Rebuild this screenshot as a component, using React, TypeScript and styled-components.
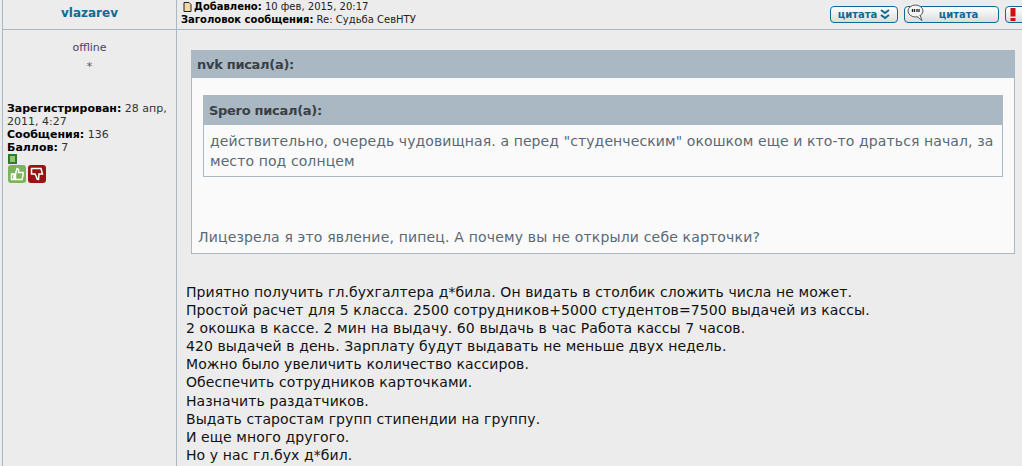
import styled, { createGlobalStyle } from "styled-components";

const GlobalStyle = createGlobalStyle`
  html, body {
    margin: 0;
    padding: 0;
    background: #ececec;
    overflow: hidden;
  }
  body {
    font-family: "DejaVu Sans", Verdana, sans-serif;
    color: #000;
  }
`;

const Page = styled.div`
  width: 1022px;
  height: 466px;
  overflow: hidden;
  padding-left: 2px;
  box-sizing: border-box;
`;

const PostGrid = styled.div`
  display: grid;
  grid-template-columns: 174px 846px;
  grid-template-rows: 30px 436px;
  width: 1020px;
  border-left: 1px solid #a9b8c2;
`;

const AuthorCell = styled.div`
  border-right: 1px solid #a9b8c2;
  border-bottom: 1px solid #a9b8c2;
  display: flex;
  align-items: center;
  justify-content: center;
  box-sizing: border-box;
  color: #0f6a93;
  font-weight: 700;
  font-size: 12px;
  padding-bottom: 3px;
`;

const HeaderCell = styled.div`
  border-bottom: 1px solid #a9b8c2;
  display: flex;
  justify-content: space-between;
  box-sizing: border-box;
  overflow: hidden;
`;

const PostMeta = styled.div`
  font-size: 10px;
  line-height: 13px;
  padding: 0 0 0 4px;
  white-space: nowrap;
  color: #222;

  b {
    color: #000;
  }
`;

const MetaFirst = styled.div`
  display: flex;
  align-items: center;
  gap: 2px;
  padding-left: 2px;
  white-space: pre;
`;

const Buttons = styled.div`
  display: flex;
  gap: 6px;
  padding-top: 6px;
  margin-right: -22px;
`;

const ActionButton = styled.div<{ $width: number; $justify?: string; $inset?: number }>`
  width: ${(p) => p.$width}px;
  height: 17px;
  box-sizing: border-box;
  border: 1px solid #0f6a93;
  border-radius: 4px;
  background: linear-gradient(#ffffff, #dcdcdc);
  color: #0f6a93;
  font-size: 10px;
  font-weight: 700;
  position: relative;
  display: flex;
  align-items: center;
  justify-content: ${(p) => p.$justify || "center"};
  gap: 3px;
  padding-left: ${(p) => p.$inset || 0}px;
`;

const BubbleOver = styled.svg`
  position: absolute;
  left: 2px;
  top: -3px;
`;

const ProfileCell = styled.div`
  border-right: 1px solid #a9b8c2;
  box-sizing: border-box;
  padding: 11px 4px 0 4px;
  font-size: 11px;
  line-height: 13px;
`;

const Status = styled.div`
  text-align: center;
  color: #4c4060;
  font-size: 11px;
`;

const Rank = styled.div`
  text-align: center;
  color: #555;
  margin-top: 6px;
`;

const ProfileInfo = styled.div`
  margin-top: 29px;
  color: #333;
  font-size: 11px;

  b {
    color: #000;
  }
`;

const OnlineMark = styled.div`
  width: 9px;
  height: 10px;
  margin-left: 1px;
  box-sizing: border-box;
  background: #8fc96a;
  border: 2px solid #2f7d2c;
`;

const Votes = styled.div`
  display: flex;
  gap: 2px;
  margin-top: 1px;
  margin-left: 1px;
`;

const VoteButton = styled.div<{ $color: string }>`
  width: 18px;
  height: 18px;
  border-radius: 3px;
  background: ${(p) => p.$color};
  display: flex;
  align-items: center;
  justify-content: center;
`;

const BodyCell = styled.div`
  padding: 20px 0 0 14px;
  box-sizing: border-box;
`;

const QuoteBox = styled.div<{ $inner?: boolean }>`
  box-sizing: border-box;
  background: #fafafa;
  border: 1px solid #a9b8c2;
  width: ${(p) => (p.$inner ? "800px" : "824px")};
  color: #5b6875;
`;

const QuoteTitle = styled.div<{ $height: number; $pad: number }>`
  height: ${(p) => p.$height}px;
  background: #a9b8c2;
  color: #3a3f46;
  font-weight: 700;
  font-size: 13px;
  letter-spacing: -0.3px;
  line-height: ${(p) => p.$height}px;
  padding-left: ${(p) => p.$pad}px;
`;

const OuterBody = styled.div`
  padding: 17px 11px 6px 11px;
`;

const QuoteText = styled.div`
  font-size: 14px;
  line-height: 20px;
  padding: 6px 6px 5px 6px;
  letter-spacing: 0.1px;
`;

const OuterText = styled.div`
  font-size: 14px;
  line-height: 20px;
  padding-top: 50px;
  margin-left: -5px;
  letter-spacing: 0.17px;
`;

const Message = styled.div`
  margin-top: 29px;
  margin-left: -5px;
  font-size: 14px;
  letter-spacing: 0.09px;
  line-height: 18.1px;
  color: #111;
  white-space: nowrap;
`;

const lines = [
  "Приятно получить гл.бухгалтера д*била. Он видать в столбик сложить числа не может.",
  "Простой расчет для 5 класса. 2500 сотрудников+5000 студентов=7500 выдачей из кассы.",
  "2 окошка в кассе. 2 мин на выдачу. 60 выдачь в час Работа кассы 7 часов.",
  "420 выдачей в день. Зарплату будут выдавать не меньше двух недель.",
  "Можно было увеличить количество кассиров.",
  "Обеспечить сотрудников карточками.",
  "Назначить раздатчиков.",
  "Выдать старостам групп стипендии на группу.",
  "И еще много другого.",
  "Но у нас гл.бух д*бил.",
];

export default function App() {
  return (
    <>
      <GlobalStyle />
      <Page>
        <PostGrid>
          <AuthorCell>vlazarev</AuthorCell>
          <HeaderCell>
            <PostMeta>
              <MetaFirst>
                <svg width="9" height="10" viewBox="0 0 9 10">
                  <path d="M1 .5h5l2 2v7H1z" fill="#f3d9a4" stroke="#222" />
                </svg>
                <span>
                  <b>Добавлено:</b> 10 фев, 2015, 20:17
                </span>
              </MetaFirst>
              <div>
                <b>Заголовок сообщения:</b> Re: Судьба СевНТУ
              </div>
            </PostMeta>
            <Buttons>
              <ActionButton $width={68}>
                цитата
                <svg width="10" height="11" viewBox="0 0 10 11">
                  <path
                    d="M1 1l4 3 4-3M1 6l4 3 4-3"
                    fill="none"
                    stroke="#0f6a93"
                    strokeWidth="2"
                  />
                </svg>
              </ActionButton>
              <ActionButton $width={95} $inset={14}>
                <BubbleOver width="18" height="17" viewBox="0 0 18 17">
                  <ellipse cx="8.500" cy="7" rx="7.500" ry="6" fill="#f4f4f4" stroke="#555" />
                  <path d="M10 12.500l5 4-2-5.500" fill="#f4f4f4" stroke="#555" />
                  <path d="M5.500 5v3M7.500 5v3M10 5v3M12 5v3" stroke="#222" strokeWidth="1.300" />
                </BubbleOver>
                цитата
              </ActionButton>
              <ActionButton $width={40} $justify="flex-start" $inset={3}>
                <svg width="8" height="15" viewBox="0 0 8 15">
                  <path d="M1.500 1h5v8.500h-5zM1.500 11h5v3h-5z" fill="#d40f0f" />
                </svg>
              </ActionButton>
            </Buttons>
          </HeaderCell>
          <ProfileCell>
            <Status>offline</Status>
            <Rank>*</Rank>
            <ProfileInfo>
              <b>Зарегистрирован:</b> 28 апр, 2011, 4:27
              <br />
              <b>Сообщения:</b> 136
              <br />
              <b>Баллов:</b> 7
            </ProfileInfo>
            <OnlineMark />
            <Votes>
              <VoteButton $color="#7db35c">
                <svg width="14" height="14" viewBox="0 0 14 14">
                  <path
                    d="M1.500 7h2.500v5.500H1.500zM5.500 7l1.500-5.500c1.500 0 2 1.500 1.500 4H13v3l-1 4H5.500z"
                    fill="none"
                    stroke="#fff"
                    strokeWidth="1.500"
                  />
                </svg>
              </VoteButton>
              <VoteButton $color="#971414">
                <svg width="14" height="14" viewBox="0 0 14 14">
                  <path
                    d="M1.500 1.500h9.500l1.500 5.500H9l-.5 5.500c-1.500 0-2-1-2-2.500L5 7H1.500z"
                    fill="none"
                    stroke="#fff"
                    strokeWidth="1.500"
                  />
                </svg>
              </VoteButton>
            </Votes>
          </ProfileCell>
          <BodyCell>
            <QuoteBox>
              <QuoteTitle $height={27} $pad={5}>
                nvk писал(а):
              </QuoteTitle>
              <OuterBody>
                <QuoteBox $inner>
                  <QuoteTitle $height={29} $pad={5}>
                    Spero писал(а):
                  </QuoteTitle>
                  <QuoteText>
                    действительно, очередь чудовищная. а перед "студенческим"
                    окошком еще и кто-то драться начал, за место под солнцем
                  </QuoteText>
                </QuoteBox>
                <OuterText>
                  Лицезрела я это явление, пипец. А почему вы не открыли себе
                  карточки?
                </OuterText>
              </OuterBody>
            </QuoteBox>
            <Message>
              {lines.map((line) => (
                <div key={line}>{line}</div>
              ))}
            </Message>
          </BodyCell>
        </PostGrid>
      </Page>
    </>
  );
}
